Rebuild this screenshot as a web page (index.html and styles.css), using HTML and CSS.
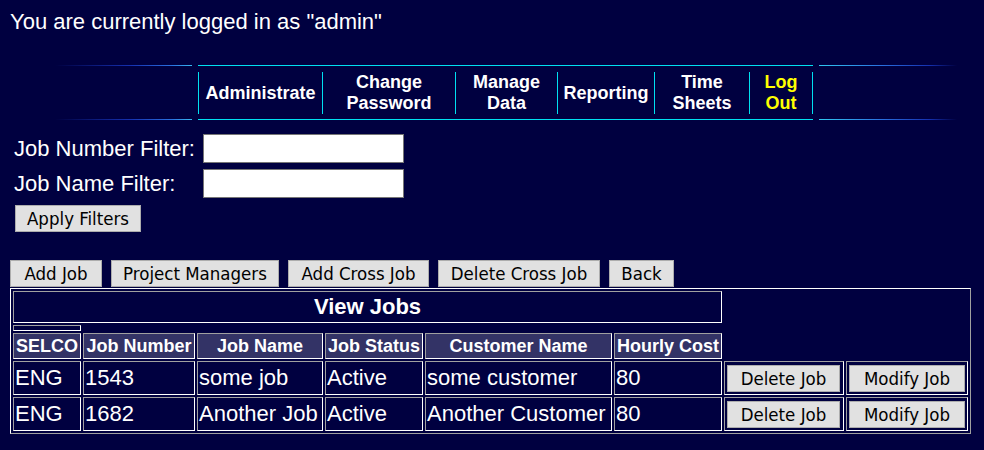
FILE: index.html
```html
<!DOCTYPE html>
<html lang="en">
<head>
<meta charset="utf-8">
<title>View Jobs</title>
<link rel="stylesheet" href="styles.css">
</head>
<body>
<p class="login">You are currently logged in as "admin"</p>

<div class="nav">
  <div class="wing wing-left"></div>
  <div class="menu">
    <a class="menu-item w124">Administrate</a>
    <a class="menu-item w133">Change<br>Password</a>
    <a class="menu-item w102">Manage<br>Data</a>
    <a class="menu-item w97">Reporting</a>
    <a class="menu-item w95">Time<br>Sheets</a>
    <a class="menu-item menu-last w63 logout">Log<br>Out</a>
  </div>
  <div class="wing wing-right"></div>
</div>

<table class="filters">
  <tr>
    <td class="filter-label">Job Number Filter:</td>
    <td><input class="filter-input" type="text"></td>
  </tr>
  <tr>
    <td class="filter-label">Job Name Filter:</td>
    <td><input class="filter-input" type="text"></td>
  </tr>
  <tr>
    <td colspan="2"><button class="btn btn-apply">Apply Filters</button></td>
  </tr>
</table>

<div class="actions">
  <button class="btn b92">Add Job</button>
  <button class="btn b168">Project Managers</button>
  <button class="btn b141">Add Cross Job</button>
  <button class="btn b162">Delete Cross Job</button>
  <button class="btn b65">Back</button>
</div>

<table class="jobs">
  <tr>
    <td class="title" colspan="6">View Jobs</td>
  </tr>
  <tr>
    <td class="spacer-cell"><div class="spacer"></div></td>
  </tr>
  <tr>
    <th class="c1">SELCO</th>
    <th class="c2">Job Number</th>
    <th class="c3">Job Name</th>
    <th class="c4">Job Status</th>
    <th class="c5">Customer Name</th>
    <th class="c6">Hourly Cost</th>
  </tr>
  <tr>
    <td>ENG</td>
    <td>1543</td>
    <td>some job</td>
    <td>Active</td>
    <td>some customer</td>
    <td>80</td>
    <td class="c7"><button class="btn btn-del">Delete Job</button></td>
    <td class="c8"><button class="btn btn-mod">Modify Job</button></td>
  </tr>
  <tr>
    <td>ENG</td>
    <td>1682</td>
    <td>Another Job</td>
    <td>Active</td>
    <td>Another Customer</td>
    <td>80</td>
    <td class="c7"><button class="btn btn-del">Delete Job</button></td>
    <td class="c8"><button class="btn btn-mod">Modify Job</button></td>
  </tr>
</table>
</body>
</html>
```

FILE: styles.css
```css
html, body {
  background: #000040;
}

body {
  margin: 0;
  padding: 9px 10px;
  color: #ffffff;
  font-family: "Liberation Sans", Arial, sans-serif;
}

.login {
  margin: 0;
  font-size: 22px;
  line-height: 25px;
}

/* navigation */
.nav {
  display: flex;
  gap: 6px;
  margin: 31px 0 0 45px;
}

.wing {
  width: 137px;
  box-sizing: border-box;
}

.wing-left {
  background:
    linear-gradient(to right, #000040 0%, #1530b0 55%, #2a70e0 85%, #38b8f0 100%) top / 100% 1px no-repeat,
    linear-gradient(to right, #000040 0%, #1530b0 55%, #2a70e0 85%, #38b8f0 100%) bottom / 100% 1px no-repeat;
}

.wing-right {
  width: 138px;
  background:
    linear-gradient(to left, #000040 0%, #1530b0 20%, #2a70e0 55%, #30c8f0 100%) top / 100% 1px no-repeat,
    linear-gradient(to left, #000040 0%, #1530b0 20%, #2a70e0 55%, #30c8f0 100%) bottom / 100% 1px no-repeat;
}

.menu {
  display: flex;
  border-top: 1px solid #00e0f0;
  border-bottom: 1px solid #00e0f0;
  padding: 6px 0 5px;
}

.menu-item {
  box-sizing: border-box;
  height: 42px;
  border-left: 1px solid #00e0f0;
  display: flex;
  align-items: center;
  justify-content: center;
  text-align: center;
  font-weight: bold;
  font-size: 18px;
  line-height: 21px;
  color: #ffffff;
  text-decoration: none;
}

.menu-last {
  border-right: 1px solid #00e0f0;
}

.logout {
  color: #ffff00;
}

.w124 { width: 124px; }
.w133 { width: 133px; }
.w102 { width: 102px; }
.w97 { width: 97px; }
.w95 { width: 95px; }
.w63 { width: 64px; }

/* filters */
.filters {
  margin-top: 10px;
  border-spacing: 2px;
}

.filters td {
  padding: 2px;
}

.filter-label {
  width: 183px;
  font-size: 22px;
  line-height: 25px;
  white-space: nowrap;
}

.filter-input {
  display: block;
  box-sizing: border-box;
  width: 201px;
  height: 29px;
  margin: 0;
  padding: 0 3px;
  border: 1px solid #767676;
  background: #ffffff;
}

/* buttons */
.btn {
  box-sizing: border-box;
  height: 27px;
  padding: 0;
  margin: 0;
  border: 1px solid #adadad;
  background: #e1e1e1;
  color: #000000;
  font-family: "DejaVu Sans Condensed", "DejaVu Sans", sans-serif;
  font-size: 18.5px;
  text-align: center;
  white-space: nowrap;
}

.btn-apply {
  display: block;
  width: 126px;
  margin: 1px;
}

.actions {
  display: flex;
  gap: 9px;
  margin-top: 23px;
  margin-bottom: 1px;
}

.b92 { width: 92px; }
.b168 { width: 168px; }
.b141 { width: 141px; }
.b162 { width: 162px; }
.b65 { width: 65px; }

/* jobs table */
.jobs {
  border-spacing: 2px;
  border: 1px solid;
  border-color: #ffffff #a0a0a0 #a0a0a0 #ffffff;
}

.jobs td,
.jobs th {
  padding: 1px;
  border: 1px solid;
  border-color: #a0a0a0 #ffffff #ffffff #a0a0a0;
  color: #ffffff;
  white-space: nowrap;
}

.jobs td {
  font-size: 22px;
  line-height: 30px;
  text-align: left;
}

.jobs th {
  background: #333366;
  font-size: 18px;
  font-weight: bold;
  line-height: 22px;
  text-align: center;
}

.jobs td.title {
  font-weight: bold;
  font-size: 22px;
  line-height: 28px;
  text-align: center;
}

.jobs td.spacer-cell {
  line-height: 0;
}

.spacer {
  height: 2px;
}

.c1 { width: 64px; }
.c2 { width: 108px; }
.c3 { width: 122px; }
.c4 { width: 94px; }
.c5 { width: 183px; }
.c6 { width: 104px; }
.c7 { width: 116px; }
.c8 { width: 118px; }

.btn-del {
  display: block;
  width: 113px;
  margin: 1px;
}

.btn-mod {
  display: block;
  width: 116px;
  margin: 1px;
}
```
